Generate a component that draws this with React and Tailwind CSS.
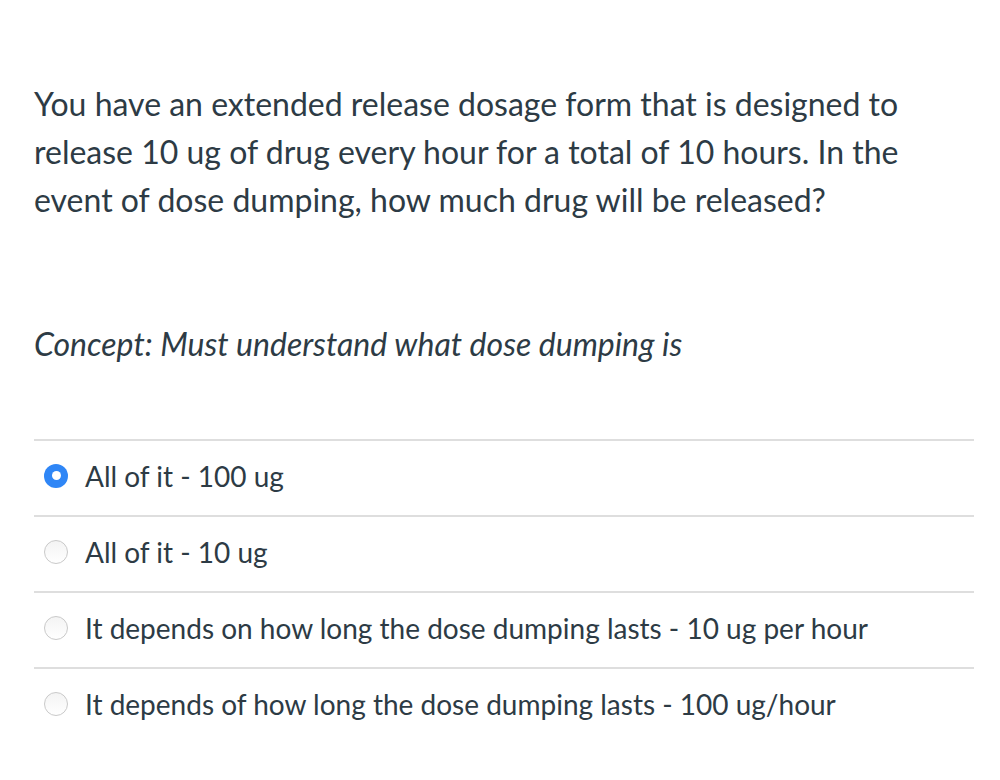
const answers = [
  { text: 'All of it - 100 ug', selected: true },
  { text: 'All of it - 10 ug' },
  { text: 'It depends on how long the dose dumping lasts - 10 ug per hour' },
  { text: 'It depends of how long the dose dumping lasts - 100 ug/hour' },
];

const Radio = ({ selected }) =>
  selected ? (
    <span className="w-[24px] h-[24px] rounded-full bg-[#2f86f6] flex items-center justify-center flex-shrink-0">
      <span className="w-[9px] h-[9px] rounded-full bg-white" />
    </span>
  ) : (
    <span className="w-[24px] h-[24px] rounded-full border border-[#c9c9c9] bg-gradient-to-b from-[#f4f4f4] to-white flex-shrink-0" />
  );

export default function App() {
  return (
    <div className="min-h-[780px] bg-white text-[#2d3b45] font-['Lato','Noto_Sans',sans-serif] pl-[34px] pr-[26px] pt-[80px]">
      <p className="text-[32px] leading-[48px] max-w-[920px]">
        You have an extended release dosage form that is designed to release 10 ug of drug every hour for a total of 10 hours. In the event of dose dumping, how much drug will be released?
      </p>
      <p className="text-[32px] leading-[48px] italic mt-[96px]">
        Concept: Must understand what dose dumping is
      </p>
      <div className="mt-[71px]">
        {answers.map((a) => (
          <div
            key={a.text}
            className="flex items-center gap-[17px] h-[76px] border-t-2 border-[#dedede] pl-[10px] pb-[5px] text-[28px]"
          >
            <Radio selected={a.selected} />
            <span>{a.text}</span>
          </div>
        ))}
      </div>
    </div>
  );
}
